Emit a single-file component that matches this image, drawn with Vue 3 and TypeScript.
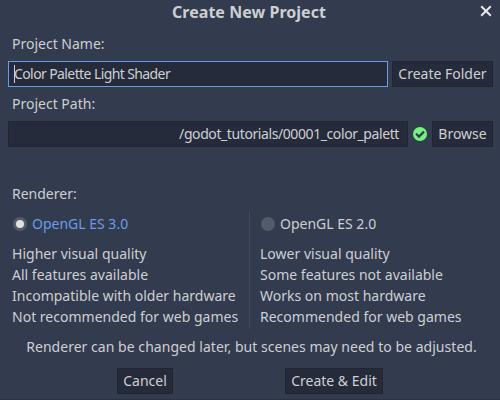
<script setup lang="ts">
import { ref } from 'vue'

interface Renderer {
  id: string
  name: string
  notes: string[]
}

const projectName = ref<string>('Color Palette Light Shader')
const projectPath = ref<string>('/godot_tutorials/00001_color_palett')
const selected = ref<string>('gles3')

const renderers: Renderer[] = [
  {
    id: 'gles3',
    name: 'OpenGL ES 3.0',
    notes: [
      'Higher visual quality',
      'All features available',
      'Incompatible with older hardware',
      'Not recommended for web games',
    ],
  },
  {
    id: 'gles2',
    name: 'OpenGL ES 2.0',
    notes: [
      'Lower visual quality',
      'Some features not available',
      'Works on most hardware',
      'Recommended for web games',
    ],
  },
]
</script>

<template>
  <main class="dialog">
    <header class="titlebar">
      <h1 class="title">Create New Project</h1>
      <svg class="close" viewBox="0 0 16 16" aria-label="Close">
        <path d="M3.2 3.2 12.8 12.8M12.8 3.2 3.2 12.8" />
      </svg>
    </header>

    <div class="label">Project Name:</div>
    <div class="row">
      <div class="field focused"><i class="caret"></i><span class="name-text">{{ projectName }}</span></div>
      <button class="btn create-folder">Create Folder</button>
    </div>

    <div class="label">Project Path:</div>
    <div class="row">
      <div class="field path"><span class="path-text">{{ projectPath }}</span></div>
      <svg class="status" viewBox="0 0 16 16" aria-label="Valid">
        <circle cx="8" cy="8" r="7" />
        <path d="M4.1 7.8 7 10.6 12 5.6" />
      </svg>
      <button class="btn browse">Browse</button>
    </div>

    <div class="label renderer-label">Renderer:</div>
    <div class="renderers">
      <section v-for="r in renderers" :key="r.id" class="renderer">
        <div class="option" :class="{ active: selected === r.id }" @click="selected = r.id">
          <span class="radio"></span><span>{{ r.name }}</span>
        </div>
        <p v-for="note in r.notes" :key="note" class="note">{{ note }}</p>
      </section>
    </div>

    <p class="hint">Renderer can be changed later, but scenes may need to be adjusted.</p>
    <footer class="actions">
      <button class="btn cancel">Cancel</button>
      <button class="btn confirm">Create &amp; Edit</button>
    </footer>
  </main>
</template>

<style>
body {
  margin: 0;
  background: #333b4f;
}
</style>

<style scoped>
.dialog {
  box-sizing: border-box;
  width: 500px;
  height: 400px;
  padding: 0 7px 0 8px;
  overflow: hidden;
  background: #333b4f;
  border-bottom: 1px solid #2b3244;
  color: #cdcfd2;
  font: 14px/20px "Noto Sans", sans-serif;
}
.titlebar {
  display: flex;
  align-items: center;
  height: 24px;
  margin-right: -1px;
}
.title {
  flex: 1;
  margin: 0 0 0 12px;
  text-align: center;
  font-size: 16px;
  line-height: 24px;
  font-weight: 700;
  letter-spacing: 0.04px;
}
.close {
  width: 16px;
  height: 16px;
  margin-top: -2px;
  fill: none;
  stroke: #e6e7e9;
  stroke-width: 2;
}
.label {
  height: 37px;
  padding-left: 4px;
  box-sizing: border-box;
  padding-top: 10px;
}
.row {
  display: flex;
  gap: 4px;
  height: 26px;
}
.row + .label {
  height: 34px;
  padding-top: 7px;
}
.field {
  flex: 1;
  display: flex;
  align-items: center;
  box-sizing: border-box;
  padding: 0 8px 0 5px;
  background: #262b3b;
  border: 1px solid #202531;
  white-space: pre;
}
.focused {
  border-color: #699ce8;
}
.caret {
  width: 1px;
  height: 18px;
  margin-right: -1px;
  background: #cdcfd2;
}
.name-text {
  letter-spacing: -0.6px;
}
.path {
  justify-content: flex-end;
}
.path-text {
  letter-spacing: -0.41px;
}
.btn {
  box-sizing: border-box;
  height: 26px;
  padding: 0;
  background: #262b3b;
  border: 1px solid #202531;
  color: inherit;
  font: inherit;
  white-space: nowrap;
}
.create-folder {
  width: 101px;
}
.browse {
  width: 61px;
}
.status {
  width: 16px;
  height: 16px;
  margin-top: 5px;
}
.status circle {
  fill: #73f280;
}
.status path {
  fill: none;
  stroke: #333b4f;
  stroke-width: 2.2;
}
.row + .renderer-label {
  height: 64px;
  padding-top: 37px;
}
.renderers {
  display: flex;
  height: 118px;
}
.renderer {
  box-sizing: border-box;
  width: 241px;
  padding-left: 4px;
}
.renderer + .renderer {
  padding-left: 10px;
  border-left: 1px solid #444b5e;
}
.option {
  display: flex;
  align-items: center;
  gap: 5px;
  height: 26px;
  margin-bottom: 6px;
  padding-left: 1px;
}
.radio {
  box-sizing: border-box;
  width: 14px;
  height: 14px;
  border-radius: 50%;
  background: #535a6a;
}
.active {
  color: #699ce8;
}
.active .radio {
  border: 3px solid #535a6a;
  background: #e0e0e0;
}
.note {
  margin: 0;
  line-height: 21px;
  white-space: nowrap;
  letter-spacing: 0.01px;
}
.hint {
  margin: 8px 0 0;
  padding-left: 2px;
  text-align: center;
  white-space: nowrap;
  letter-spacing: 0.035px;
}
.actions {
  display: flex;
  gap: 112px;
  margin: 11px 0 0 109px;
}
.cancel {
  width: 56px;
}
.confirm {
  width: 98px;
}
</style>
